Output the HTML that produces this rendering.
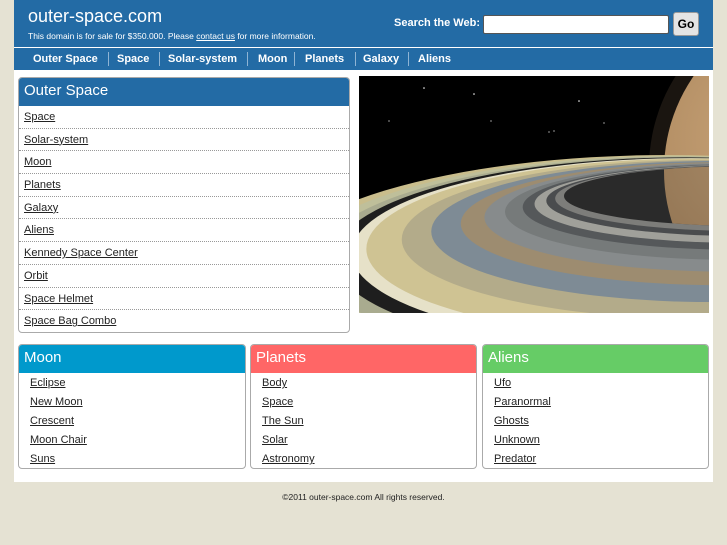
<!DOCTYPE html>
<html><head><meta charset="utf-8"><style>
*{margin:0;padding:0;box-sizing:border-box}
body{width:727px;height:545px;background:#e5e2d3;font-family:"Liberation Sans",sans-serif;position:relative;overflow:hidden}
.abs{position:absolute}
#wrap{left:14px;top:0;width:699px;height:482px;background:#fff}
#hdr{left:14px;top:0;width:699px;height:47px;background:#236ba5}
#nav{left:14px;top:48px;width:699px;height:22px;background:#236ba5}
#nav span{position:absolute;top:5px;color:#fff;font-weight:bold;font-size:11px}
.sep{position:absolute;top:4px;width:1px;height:14px;background:#8fb4d4}
a{color:#222;text-decoration:underline}
.box{position:absolute;border:1px solid #aaa;border-radius:4px;background:#fff;overflow:hidden}
.bh{height:27px;color:#fff;font-size:15px;padding:4px 0 0 5px}
.ls div{height:22.7px;border-bottom:1px dotted #999;font-size:11px;padding:5px 0 0 5px}
.ls div:last-child{border-bottom:none}
.bl div{font-size:11px;height:19px;padding:3px 0 0 11px}
</style></head><body>
<div id="wrap" class="abs"></div>
<div id="hdr" class="abs">
 <div class="abs" style="left:14px;top:6px;color:#fff;font-size:18px">outer-space.com</div>
 <div class="abs" style="left:14px;top:31px;color:#fff;font-size:8.5px">This domain is for sale for $350.000. Please <u>contact us</u> for more information.</div>
 <div class="abs" style="left:380px;top:17px;color:#fff;font-size:11px;font-weight:bold">Search the Web:</div>
 <div class="abs" style="left:469px;top:15px;width:186px;height:19px;background:#fff;border:1px solid #555;border-radius:2px"></div>
 <div class="abs" style="left:659px;top:12px;width:26px;height:24px;background:#e4e4e4;border:1px solid #999;border-radius:3px;font-size:12px;font-weight:bold;text-align:center;line-height:22px">Go</div>
</div>
<div id="nav" class="abs">
 <span style="left:19px">Outer Space</span><i class="sep" style="left:94px"></i>
 <span style="left:103px">Space</span><i class="sep" style="left:145px"></i>
 <span style="left:154px">Solar-system</span><i class="sep" style="left:233px"></i>
 <span style="left:244px">Moon</span><i class="sep" style="left:280px"></i>
 <span style="left:291px">Planets</span><i class="sep" style="left:341px"></i>
 <span style="left:349px">Galaxy</span><i class="sep" style="left:394px"></i>
 <span style="left:404px">Aliens</span>
</div>
<div class="box" style="left:18px;top:77px;width:332px;height:256px">
 <div class="bh" style="background:#236ba5;height:28px">Outer Space</div>
 <div class="ls">
 <div><a>Space</a></div><div><a>Solar-system</a></div><div><a>Moon</a></div><div><a>Planets</a></div><div><a>Galaxy</a></div><div><a>Aliens</a></div><div><a>Kennedy Space Center</a></div><div><a>Orbit</a></div><div><a>Space Helmet</a></div><div><a>Space Bag Combo</a></div>
 </div>
</div>
<svg class="abs" style="left:359px;top:76px" width="350" height="237" viewBox="0 0 350 237">
 <defs>
  <radialGradient id="pl" cx="0.35" cy="0.4" r="0.7"><stop offset="0" stop-color="#cba77c"/><stop offset="1" stop-color="#a07a50"/></radialGradient>
  <clipPath id="hole"><ellipse cx="390" cy="120" rx="185" ry="30"/></clipPath>
 </defs>
 <rect width="350" height="237" fill="#000"/>
 <g fill="#fff"><circle cx="65" cy="12" r=".8"/><circle cx="115" cy="18" r=".8"/><circle cx="220" cy="25" r=".8"/><circle cx="30" cy="45" r=".6"/><circle cx="195" cy="55" r=".6"/><circle cx="245" cy="47" r=".6"/><circle cx="310" cy="35" r=".6"/><circle cx="132" cy="45" r=".6"/><circle cx="190" cy="56" r=".6"/></g>
 <circle cx="462" cy="92" r="172" fill="#1a1510"/>
 <circle cx="472" cy="95" r="167" fill="url(#pl)"/>
 <ellipse cx="310" cy="199" rx="400" ry="120" fill="#c9bd8c"/>
 <ellipse cx="316.4" cy="192.7" rx="382.8" ry="112.8" fill="#bfbf9a"/>
 <ellipse cx="322.8" cy="186.4" rx="365.6" ry="105.6" fill="#a9ab8f"/>
 <ellipse cx="327.6" cy="181.6" rx="352.7" ry="100.2" fill="#1e1e1e"/>
 <ellipse cx="332.4" cy="176.9" rx="339.8" ry="94.8" fill="#e6e1c8"/>
 <ellipse cx="336.4" cy="172.9" rx="329.05" ry="90.3" fill="#cfc393"/>
 <ellipse cx="346" cy="163.45" rx="303.25" ry="79.5" fill="#b3ab8a"/>
 <ellipse cx="354" cy="155.55" rx="281.75" ry="70.5" fill="#7e8b95"/>
 <ellipse cx="362" cy="147.65" rx="260.25" ry="61.5" fill="#9d8c70"/>
 <ellipse cx="368.4" cy="141.3" rx="243" ry="54.3" fill="#878b8c"/>
 <ellipse cx="374" cy="135.8" rx="228" ry="48" fill="#767a7a"/>
 <ellipse cx="378.8" cy="131.1" rx="215.1" ry="42.6" fill="#55585a"/>
 <ellipse cx="382" cy="127.9" rx="206.5" ry="39" fill="#a0a09a"/>
 <ellipse cx="385.2" cy="124.7" rx="197.9" ry="35.4" fill="#4a4c4e"/>
 <ellipse cx="387.6" cy="122.4" rx="191.45" ry="32.7" fill="#7d7d7a"/>
 <ellipse cx="390" cy="120" rx="185" ry="30" fill="#2a2a2a"/>
 <g clip-path="url(#hole)" opacity="0.8"><circle cx="472" cy="95" r="167" fill="url(#pl)"/></g>
</svg>
<div class="box" style="left:18px;top:344px;width:228px;height:125px">
 <div class="bh" style="background:#0099cc;height:28px">Moon</div>
 <div class="bl" style="padding-top:1px"><div><a>Eclipse</a></div><div><a>New Moon</a></div><div><a>Crescent</a></div><div><a>Moon Chair</a></div><div><a>Suns</a></div></div>
</div>
<div class="box" style="left:250px;top:344px;width:227px;height:125px">
 <div class="bh" style="background:#ff6666;height:28px">Planets</div>
 <div class="bl" style="padding-top:1px"><div><a>Body</a></div><div><a>Space</a></div><div><a>The Sun</a></div><div><a>Solar</a></div><div><a>Astronomy</a></div></div>
</div>
<div class="box" style="left:482px;top:344px;width:227px;height:125px">
 <div class="bh" style="background:#66cc66;height:28px">Aliens</div>
 <div class="bl" style="padding-top:1px"><div><a>Ufo</a></div><div><a>Paranormal</a></div><div><a>Ghosts</a></div><div><a>Unknown</a></div><div><a>Predator</a></div></div>
</div>
<div class="abs" style="left:0;width:727px;top:492px;text-align:center;font-size:8.5px;color:#222">©2011 outer-space.com All rights reserved.</div>
</body></html>
